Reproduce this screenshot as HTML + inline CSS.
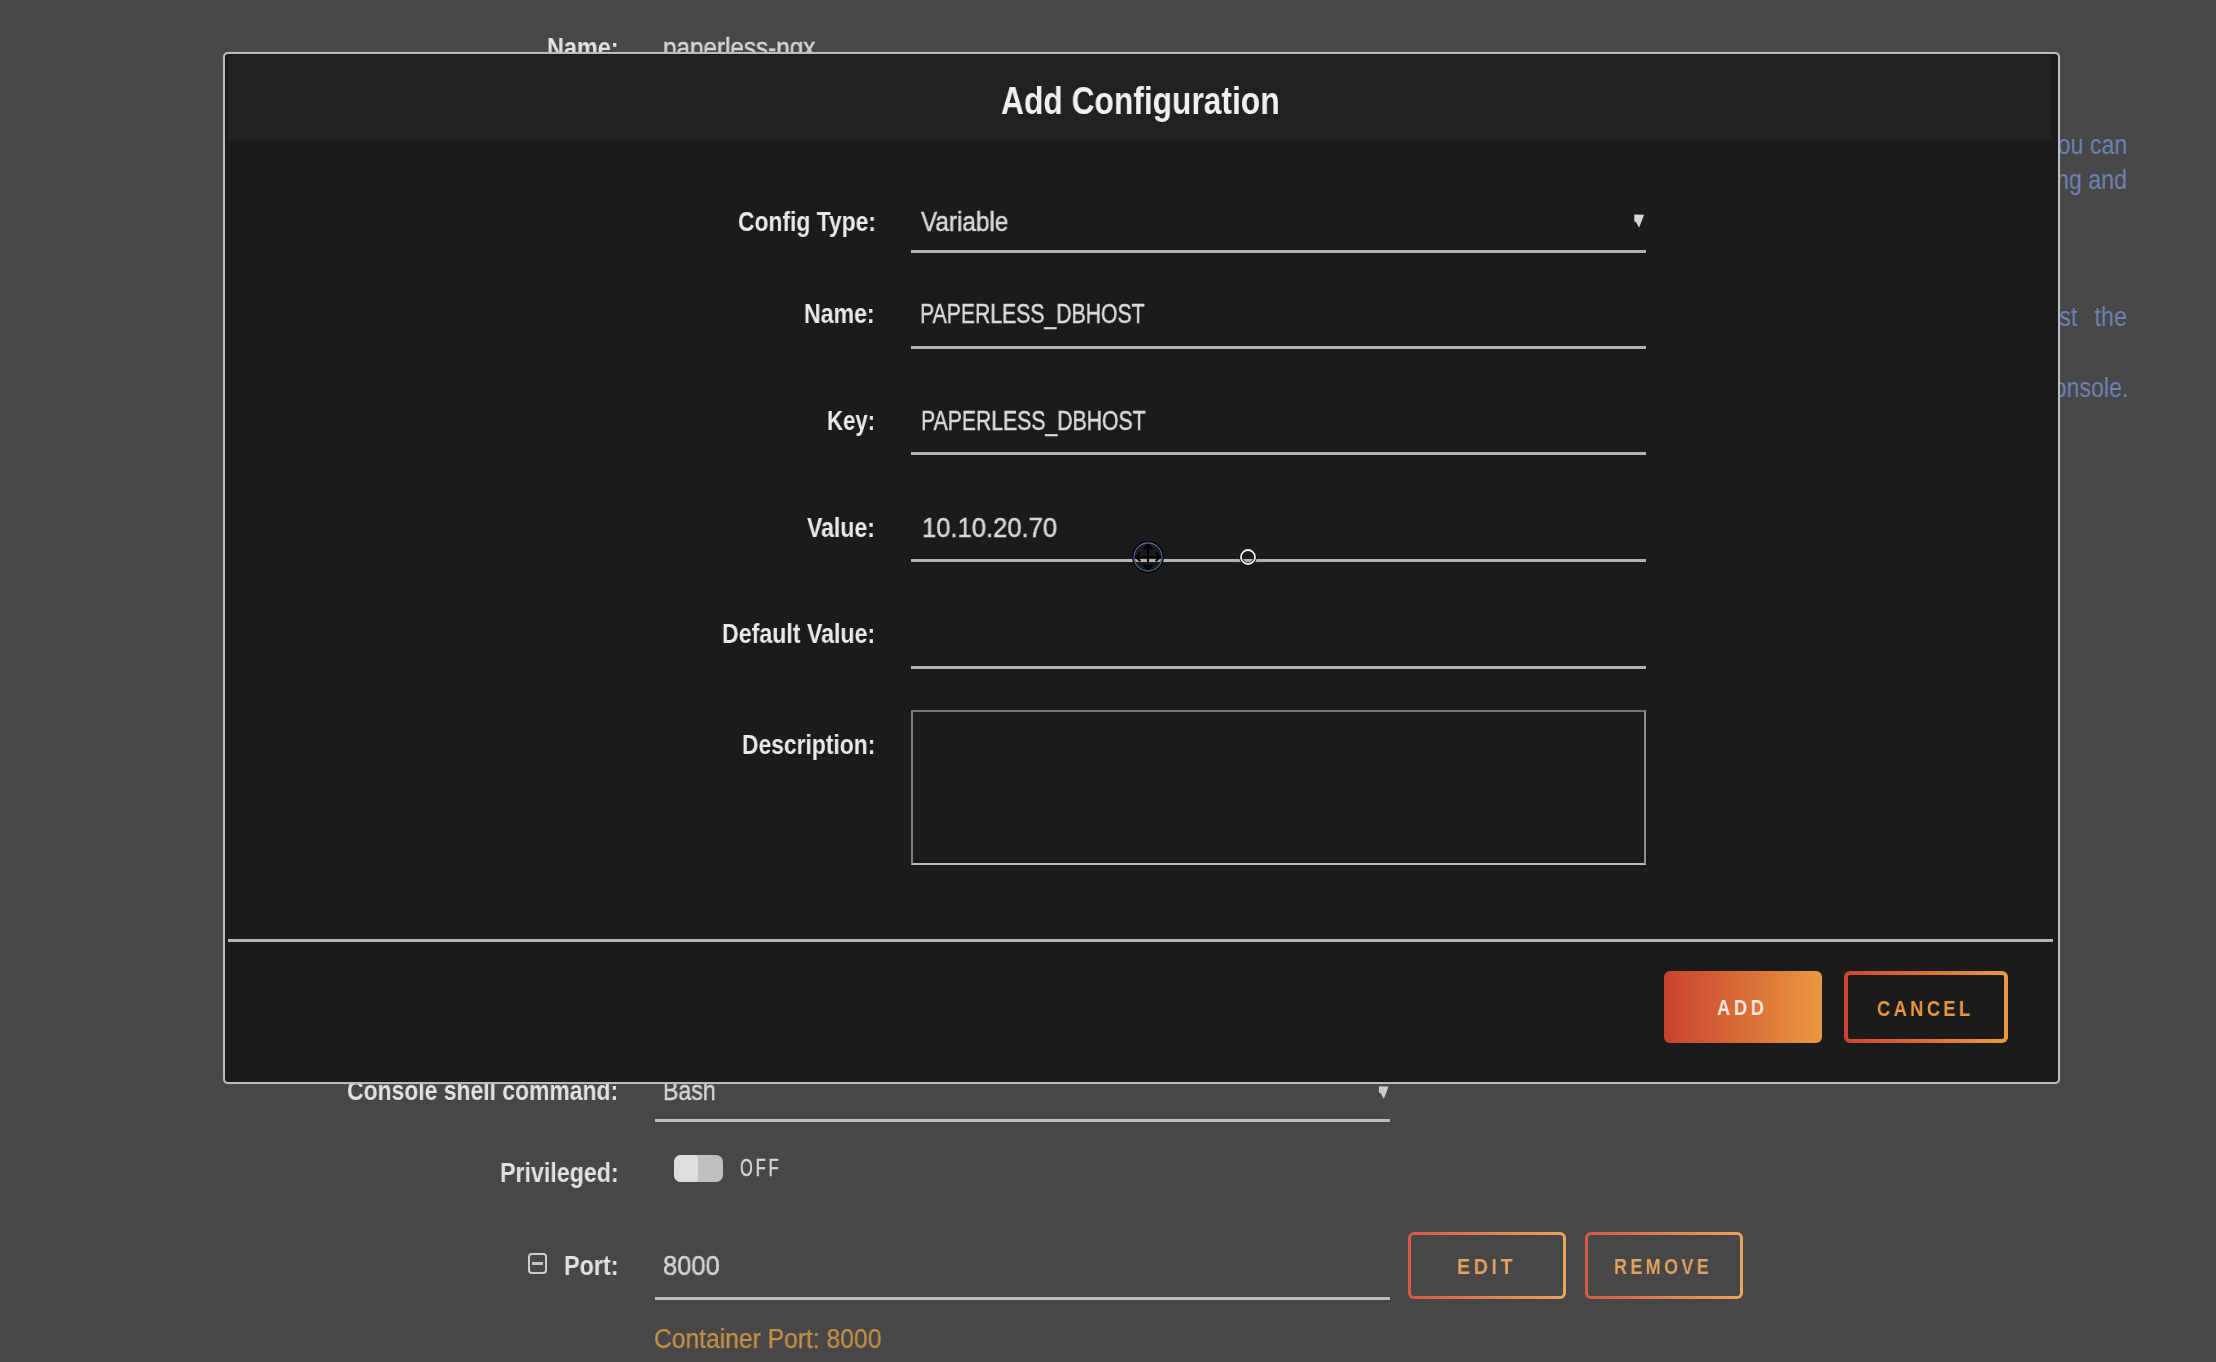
<!DOCTYPE html>
<html><head><meta charset="utf-8"><title>Add Configuration</title>
<style>
html,body{margin:0;padding:0;}
body{width:2216px;height:1362px;overflow:hidden;background:#474747;position:relative;font-family:"Liberation Sans",sans-serif;}
.t{position:absolute;font-family:"Liberation Sans",sans-serif;line-height:1;white-space:pre;transform-origin:0 0;will-change:transform;}
.r{position:absolute;box-sizing:border-box;}
.ul{position:absolute;height:3px;background:#b3b3b3;}
.gbtn{position:absolute;box-sizing:border-box;border-radius:6px;}
</style></head><body>

<!-- ===== background page ===== -->
<div class="ul" style="left:655px;top:1119px;width:735px;background:#bdbdbd"></div>
<svg class="r" style="left:1376px;top:1084px" width="16" height="18" viewBox="1376 1084 16 18"><polygon points="1378.9,1086.2 1388.6,1086.5 1383.8,1099 1380.9,1093.6 1378.9,1092.6" fill="#cbcbcb"/></svg>
<div class="r" style="left:674px;top:1155px;width:49px;height:27px;border-radius:7px;background:#bfbfbf"></div>
<div class="r" style="left:674px;top:1155px;width:24px;height:27px;border-radius:7px 3px 3px 7px;background:#dedede"></div>
<div class="r" style="left:528px;top:1253px;width:19px;height:21px;border:2px solid #cdcdcd;border-radius:4px"></div>
<div class="r" style="left:532px;top:1262px;width:11px;height:2.5px;background:#c4c4c4"></div>
<div class="ul" style="left:655px;top:1297px;width:735px;background:#bdbdbd"></div>
<div class="gbtn" style="left:1408px;top:1232px;width:158px;height:67px;border:3px solid transparent;background:linear-gradient(#474747,#474747) padding-box,linear-gradient(90deg,#d35a48,#eaa55c) border-box;"></div>
<div class="gbtn" style="left:1585px;top:1232px;width:158px;height:67px;border:3px solid transparent;background:linear-gradient(#474747,#474747) padding-box,linear-gradient(90deg,#d35a48,#eaa55c) border-box;"></div>
<div class='t' style='left:546.73px;top:35.00px;font-size:27px;font-weight:bold;color:#e2e2e2;letter-spacing:0px;transform:scaleX(0.8675);'>Name:</div>
<div class='t' style='left:663.10px;top:35.00px;font-size:27px;font-weight:normal;color:#d4d4d4;letter-spacing:0px;transform:scaleX(0.8988);-webkit-text-stroke:0.5px #d4d4d4;'>paperless-ngx</div>
<div class='t' style='left:2045.86px;top:132.40px;font-size:27px;font-weight:normal;color:#6e82b4;letter-spacing:0px;transform:scaleX(0.8600);-webkit-text-stroke:0.15px #6e82b4;'>you can</div>
<div class='t' style='left:2007.16px;top:167.40px;font-size:27px;font-weight:normal;color:#6e82b4;letter-spacing:0px;transform:scaleX(0.8600);-webkit-text-stroke:0.15px #6e82b4;'>loading and</div>
<div class='t' style='left:2026.94px;top:303.70px;font-size:27px;font-weight:normal;color:#6e82b4;letter-spacing:0px;transform:scaleX(0.8600);-webkit-text-stroke:0.15px #6e82b4;word-spacing:12.6px;'>must the</div>
<div class='t' style='left:2041.56px;top:374.60px;font-size:27px;font-weight:normal;color:#6e82b4;letter-spacing:0px;transform:scaleX(0.8600);-webkit-text-stroke:0.15px #6e82b4;'>console.</div>
<div class='t' style='left:347.15px;top:1078.30px;font-size:27px;font-weight:bold;color:#e2e2e2;letter-spacing:0px;transform:scaleX(0.8486);'>Console shell command:</div>
<div class='t' style='left:663.14px;top:1078.30px;font-size:27px;font-weight:normal;color:#d4d4d4;letter-spacing:0px;transform:scaleX(0.8567);-webkit-text-stroke:0.5px #d4d4d4;'>Bash</div>
<div class='t' style='left:499.64px;top:1160.00px;font-size:27px;font-weight:bold;color:#e2e2e2;letter-spacing:0px;transform:scaleX(0.8600);'>Privileged:</div>
<div class='t' style='left:740.28px;top:1156.70px;font-size:23px;font-weight:normal;color:#d6d6d6;letter-spacing:4px;transform:scaleX(0.7151);-webkit-text-stroke:0.5px #d6d6d6;'>OFF</div>
<div class='t' style='left:563.84px;top:1252.50px;font-size:27px;font-weight:bold;color:#e2e2e2;letter-spacing:0px;transform:scaleX(0.8650);'>Port:</div>
<div class='t' style='left:663.05px;top:1252.50px;font-size:27px;font-weight:normal;color:#d4d4d4;letter-spacing:0px;transform:scaleX(0.9458);-webkit-text-stroke:0.5px #d4d4d4;'>8000</div>
<div class='t' style='left:1457.11px;top:1256.30px;font-size:22px;font-weight:bold;color:#e3a060;letter-spacing:4px;transform:scaleX(0.8934);'>EDIT</div>
<div class='t' style='left:1613.98px;top:1256.30px;font-size:22px;font-weight:bold;color:#e3a060;letter-spacing:4px;transform:scaleX(0.8211);'>REMOVE</div>
<div class='t' style='left:654.39px;top:1325.50px;font-size:27px;font-weight:normal;color:#c88f46;letter-spacing:0px;transform:scaleX(0.9129);-webkit-text-stroke:0.25px #c88f46;'>Container Port: 8000</div>

<!-- ===== dialog ===== -->
<div class="r" style="left:223px;top:52px;width:1837px;height:1032px;border:2px solid #bcbcbc;border-radius:5px;background:#1c1b1c;overflow:hidden;box-shadow:0 0 0.6px 0.2px rgba(190,190,190,0.35)">
  <div class="r" style="left:3px;top:1px;right:7px;height:86px;background:#212121;border-radius:4px 4px 0 0"></div>
</div>
<div class="ul" style="left:911px;top:250px;width:735px"></div>
<svg class="r" style="left:1632px;top:212px" width="16" height="18" viewBox="1632 212 16 18"><polygon points="1634.3,214.5 1644.1,214.7 1639.1,227.8 1636.3,222.4 1634.3,221.3" fill="#d6d6d6"/></svg>
<div class="ul" style="left:911px;top:346px;width:735px"></div>
<div class="ul" style="left:911px;top:452px;width:735px"></div>
<div class="ul" style="left:911px;top:559px;width:735px"></div>
<div class="ul" style="left:911px;top:666px;width:735px"></div>
<div class="r" style="left:911px;top:710px;width:735px;height:155px;border:2px solid #747474;border-left-color:#7e7e7e;border-right-color:#8e8e8e;border-bottom-color:#bababa"></div>
<div class="ul" style="left:228px;top:939px;width:1825px;background:#b5b5b5"></div>
<div class="gbtn" style="left:1664px;top:971px;width:158px;height:72px;background:linear-gradient(90deg,#c8422f,#ea9840)"></div>
<div class="gbtn" style="left:1844px;top:971px;width:164px;height:72px;border:4px solid transparent;background:linear-gradient(#1c1b1c,#1c1b1c) padding-box,linear-gradient(90deg,#cf4430,#ea9a40) border-box;"></div>
<div class='t' style='left:1001.39px;top:81.00px;font-size:39px;font-weight:bold;color:#f0f0f0;letter-spacing:0px;transform:scaleX(0.8141);'>Add Configuration</div>
<div class='t' style='left:737.75px;top:208.60px;font-size:27px;font-weight:bold;color:#e9e9e9;letter-spacing:0px;transform:scaleX(0.8462);'>Config Type:</div>
<div class='t' style='left:921.30px;top:208.50px;font-size:27px;font-weight:normal;color:#d9d9d9;letter-spacing:0px;transform:scaleX(0.9000);-webkit-text-stroke:0.5px #d9d9d9;'>Variable</div>
<div class='t' style='left:804.14px;top:301.40px;font-size:27px;font-weight:bold;color:#e9e9e9;letter-spacing:0px;transform:scaleX(0.8562);'>Name:</div>
<div class='t' style='left:920.21px;top:301.40px;font-size:27px;font-weight:normal;color:#d9d9d9;letter-spacing:0px;transform:scaleX(0.7853);-webkit-text-stroke:0.5px #d9d9d9;'>PAPERLESS_DBHOST</div>
<div class='t' style='left:827.38px;top:407.70px;font-size:27px;font-weight:bold;color:#e9e9e9;letter-spacing:0px;transform:scaleX(0.8214);'>Key:</div>
<div class='t' style='left:921.21px;top:407.70px;font-size:27px;font-weight:normal;color:#d9d9d9;letter-spacing:0px;transform:scaleX(0.7853);-webkit-text-stroke:0.5px #d9d9d9;'>PAPERLESS_DBHOST</div>
<div class='t' style='left:807.40px;top:515.00px;font-size:27px;font-weight:bold;color:#e9e9e9;letter-spacing:0px;transform:scaleX(0.8538);'>Value:</div>
<div class='t' style='left:921.90px;top:515.00px;font-size:27px;font-weight:normal;color:#d9d9d9;letter-spacing:0px;transform:scaleX(0.9479);-webkit-text-stroke:0.5px #d9d9d9;'>10.10.20.70</div>
<div class='t' style='left:722.14px;top:621.00px;font-size:27px;font-weight:bold;color:#e9e9e9;letter-spacing:0px;transform:scaleX(0.8580);'>Default Value:</div>
<div class='t' style='left:741.95px;top:732.00px;font-size:27px;font-weight:bold;color:#e9e9e9;letter-spacing:0px;transform:scaleX(0.8465);'>Description:</div>
<div class='t' style='left:1717.37px;top:997.20px;font-size:22px;font-weight:bold;color:#f6ebe4;letter-spacing:4.5px;transform:scaleX(0.8273);'>ADD</div>
<div class='t' style='left:1877.20px;top:997.70px;font-size:22px;font-weight:bold;color:#e8973f;letter-spacing:4px;transform:scaleX(0.8339);'>CANCEL</div>

<!-- cursors -->
<svg class="r" style="left:1130px;top:539px" width="36" height="36" viewBox="0 0 36 36">
  <circle cx="18" cy="18" r="14.6" fill="none" stroke="#000" stroke-width="2.6"/>
  <circle cx="18" cy="18" r="14" fill="none" stroke="#4a6a92" stroke-width="1.3"/>
  <g stroke="#000" stroke-width="2.2" fill="none" stroke-linecap="square">
    <line x1="18" y1="6" x2="18" y2="30"/><line x1="6" y1="18" x2="30" y2="18"/>
    <polyline points="14.5,9.5 18,6 21.5,9.5"/><polyline points="14.5,26.5 18,30 21.5,26.5"/>
    <polyline points="9.5,14.5 6,18 9.5,21.5"/><polyline points="26.5,14.5 30,18 26.5,21.5"/>
  </g>
</svg>
<svg class="r" style="left:1238px;top:547px" width="20" height="20" viewBox="0 0 20 20">
  <circle cx="10" cy="10" r="7" fill="none" stroke="#111" stroke-width="3.6"/>
  <circle cx="10" cy="10" r="7" fill="none" stroke="#f2f2f2" stroke-width="1.8"/>
</svg>
</body></html>
